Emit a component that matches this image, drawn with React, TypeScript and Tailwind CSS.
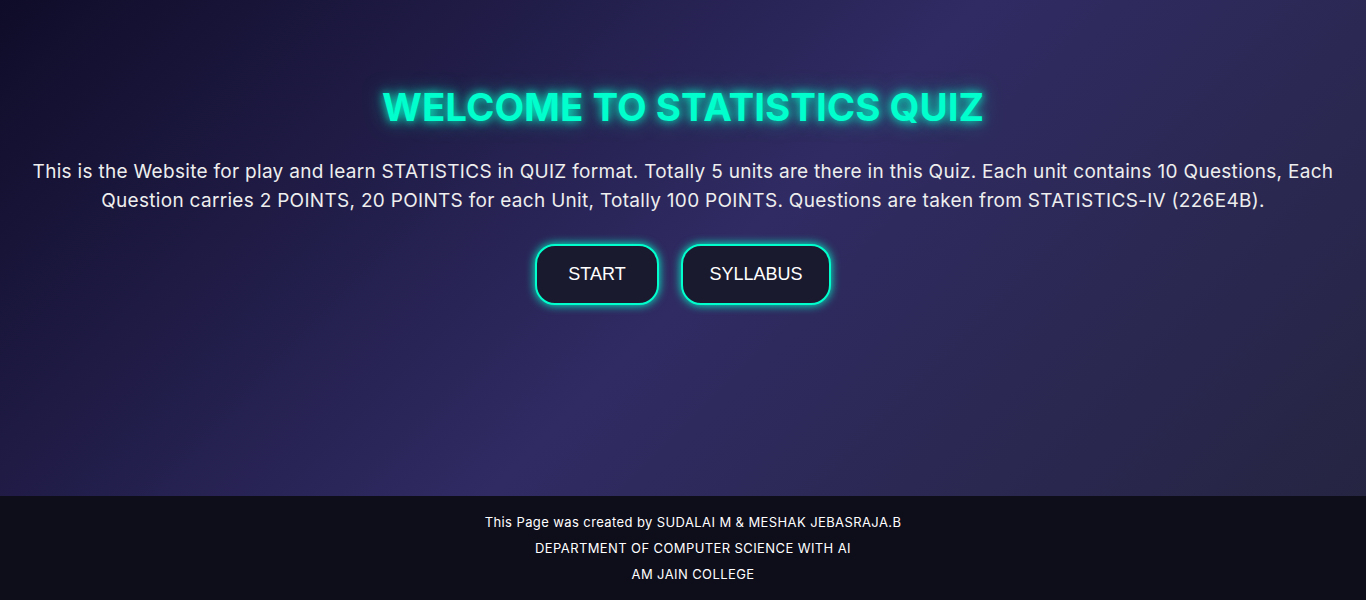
import React from "react";

export default function App() {
  return (
    <div className="min-h-[600px] flex flex-col bg-[linear-gradient(135deg,#0f0c29,#302b63,#24243e)] font-['Inter','Noto_Sans',sans-serif]">
      <main className="h-[496px] flex flex-col items-center px-[26px] pt-[81px]">
        <h1 className="text-[38.5px] leading-[52px] font-bold text-[#00ffcc] [text-shadow:0_0_10px_#00ffcc,0_0_20px_rgba(0,255,204,0.5)]">
          WELCOME TO STATISTICS QUIZ
        </h1>
        <p className="mt-[24px] text-[19px] tracking-[0.3px] leading-[29px] text-[#eeeeee] text-center">
          This is the Website for play and learn STATISTICS in QUIZ format. Totally 5 units are there in this Quiz. Each unit contains 10 Questions, Each Question carries 2 POINTS, 20 POINTS for each Unit, Totally 100 POINTS. Questions are taken from STATISTICS-IV (226E4B).
        </p>
        <div className="mt-[29px] flex gap-[22px]">
          <button className="w-[124px] h-[61px] rounded-[20px] border-2 border-[#00ffcc] bg-[#1a1a2e] text-white text-[18px] font-['Liberation_Sans',Arial,sans-serif] shadow-[0_0_10px_#00ffcc]">
            START
          </button>
          <button className="w-[150px] h-[61px] rounded-[20px] border-2 border-[#00ffcc] bg-[#1a1a2e] text-white text-[18px] font-['Liberation_Sans',Arial,sans-serif] shadow-[0_0_10px_#00ffcc]">
            SYLLABUS
          </button>
        </div>
      </main>
      <footer className="h-[104px] bg-[#0e0d1a] flex flex-col items-center justify-center pl-[20px] text-white text-[13px] tracking-[0.4px] leading-[26px]">
        <p>This Page was created by SUDALAI M &amp; MESHAK JEBASRAJA.B</p>
        <p>DEPARTMENT OF COMPUTER SCIENCE WITH AI</p>
        <p>AM JAIN COLLEGE</p>
      </footer>
    </div>
  );
}
